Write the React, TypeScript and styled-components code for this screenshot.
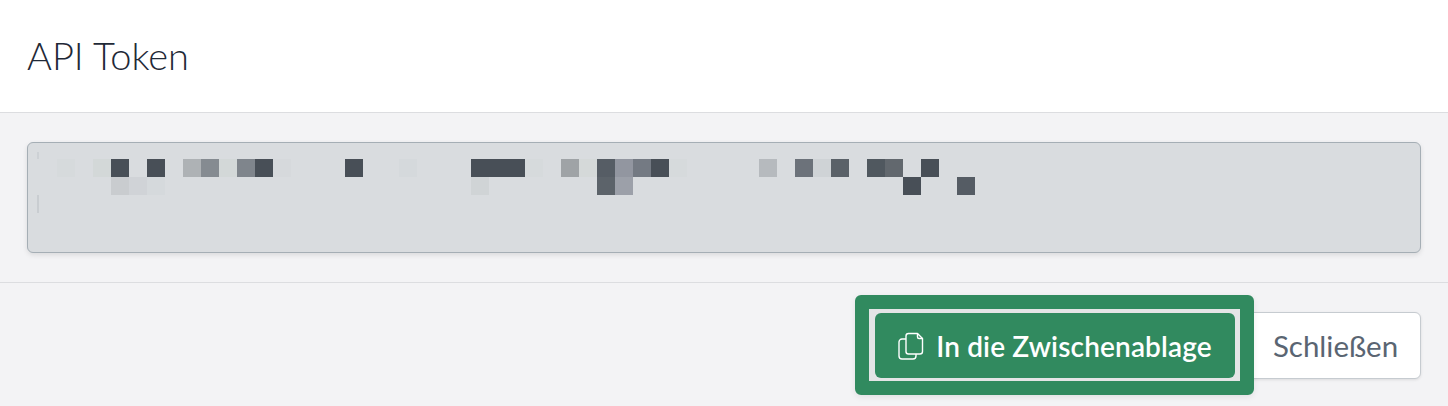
import React from "react";
import styled, { createGlobalStyle } from "styled-components";

const GlobalStyle = createGlobalStyle`
  html, body {
    margin: 0;
    padding: 0;
    background: #f3f3f5;
    font-family: "Lato", "Noto Sans", sans-serif;
  }
  * {
    box-sizing: border-box;
  }
`;

// blurred token, one entry per 18px cell, "" = nothing there
const rowOne: Record<number, string> = {
  0: "#d6dadc", 2: "#d3d8d8", 3: "#484f57", 5: "#484f57", 7: "#aeb2b5", 8: "#858b91",
  9: "#d3d8d8", 10: "#7f858c", 11: "#484f57", 12: "#d6d9dc", 16: "#484f57", 19: "#d5d9dc",
  23: "#484f57", 24: "#484f57", 25: "#484f57", 26: "#d6dadc", 28: "#9fa3a6", 29: "#d5d9d9",
  30: "#565d65", 31: "#9296a0", 32: "#747a83", 33: "#484f57", 34: "#d6dadc", 39: "#b6babe",
  41: "#6c727a", 42: "#cfd3d6", 43: "#5a6168", 45: "#50585f", 46: "#62686e", 48: "#484f57",
};
const rowTwo: Record<number, string> = {
  3: "#c9cccf", 4: "#d0d3d7", 5: "#d5d9dc", 23: "#d0d4d6", 30: "#5c636a", 31: "#9ca0a9",
  47: "#484f57", 50: "#555c64",
};

function CopyIcon() {
  return (
    <svg width="26" height="28" viewBox="0 0 26 28" fill="none" stroke="#fff" strokeWidth="1.4" strokeLinejoin="round">
      <path d="M10.5 1.5h9l5 5v13a2.5 2.5 0 0 1-2.500 2.500h-11.500a2.500 2.500 0 0 1-2.500-2.500V4a2.500 2.500 0 0 1 2.500-2.500z" />
      <path d="M19.500 1.500v3.500a1.500 1.500 0 0 0 1.500 1.500h3.500" />
      <path d="M8 7H4a3 3 0 0 0-3 3v14a3 3 0 0 0 3 3h11a3 3 0 0 0 3-3v-2" />
    </svg>
  );
}

function App() {
  const cells = Array.from({ length: 51 });
  return (
    <Modal>
      <GlobalStyle />
      <Header>
        <Title>API Token</Title>
      </Header>
      <Body>
        <TokenBox>
          <Gutter>
            <Mark $height={7} $color="#cdd1d5" />
            <Mark $height={18} $color="#c9cdd1" />
          </Gutter>
          <Mosaic>
            {cells.map((_, i) => (
              <Cell key={"a" + i} $color={rowOne[i]} />
            ))}
            {cells.map((_, i) => (
              <Cell key={"b" + i} $color={rowTwo[i]} />
            ))}
          </Mosaic>
        </TokenBox>
      </Body>
      <Footer>
        <Highlight>
          <Ring>
            <CopyButton>
              <CopyIcon />
              In die Zwischenablage
            </CopyButton>
          </Ring>
        </Highlight>
        <CloseButton>Schließen</CloseButton>
      </Footer>
    </Modal>
  );
}

const Modal = styled.div`
  width: 1448px;
  height: 406px;
  overflow: hidden;
  display: flex;
  flex-direction: column;
  background: #f3f3f5;
`;
const Header = styled.header`
  height: 113px;
  display: flex;
  align-items: center;
  padding: 0 27px 2px;
  background: #fff;
  border-bottom: 1px solid #dcdde0;
`;
const Title = styled.h1`
  margin: 0;
  font-size: 38px;
  font-weight: 300;
  color: #1f2937;
`;
const Body = styled.main`
  height: 170px;
  padding: 29px 27px;
  border-bottom: 1px solid #dcdde0;
`;
const TokenBox = styled.div`
  width: 1394px;
  height: 111px;
  display: flex;
  padding: 9px 0 0 9px;
  gap: 18px;
  background: #d9dcdf;
  border: 1px solid #a5aeb5;
  border-radius: 6px;
  box-shadow: 0 2px 5px rgba(0, 0, 0, 0.1);
`;
const Gutter = styled.div`
  width: 2px;
  display: flex;
  flex-direction: column;
  gap: 36px;
`;
const Mark = styled.span<{ $height: number; $color: string }>`
  width: 2px;
  height: ${(p) => p.$height}px;
  background: ${(p) => p.$color};
`;
const Mosaic = styled.div`
  display: grid;
  grid-template-columns: repeat(51, 18px);
  grid-auto-rows: 18px;
  margin-top: 7px;
  height: 36px;
`;
const Cell = styled.span<{ $color?: string }>`
  background: ${(p) => p.$color || "transparent"};
`;
const Footer = styled.footer`
  flex: 1;
  display: flex;
  justify-content: flex-end;
  align-items: flex-start;
  padding: 12px 27px 0 0;
`;
const Highlight = styled.div`
  position: relative;
  z-index: 1;
  width: 399px;
  height: 100px;
  margin-right: -8px;
  border: 14px solid #318a5f;
  border-radius: 6px;
  box-shadow: 0 2px 6px rgba(0, 0, 0, 0.08);
`;
const Ring = styled.div`
  height: 100%;
  padding: 4px 5px 3px 6px;
  background: #e4e5e6;
`;
const CopyButton = styled.button`
  width: 100%;
  height: 100%;
  display: flex;
  align-items: center;
  justify-content: center;
  gap: 12px;
  padding: 0;
  border: none;
  border-radius: 6px;
  background: #318a5f;
  color: #fff;
  font-family: inherit;
  font-size: 28px;
  font-weight: 600;
  letter-spacing: 0.15px;
`;
const CloseButton = styled.button`
  width: 175px;
  height: 67px;
  margin-top: 17px;
  padding: 0 0 0 4px;
  background: #fff;
  border: 1px solid #c6cbd0;
  border-radius: 6px;
  box-shadow: 0 1px 3px rgba(0, 0, 0, 0.1);
  color: #5a6572;
  font-family: inherit;
  font-size: 29.5px;
  font-weight: 400;
`;

export default App;
